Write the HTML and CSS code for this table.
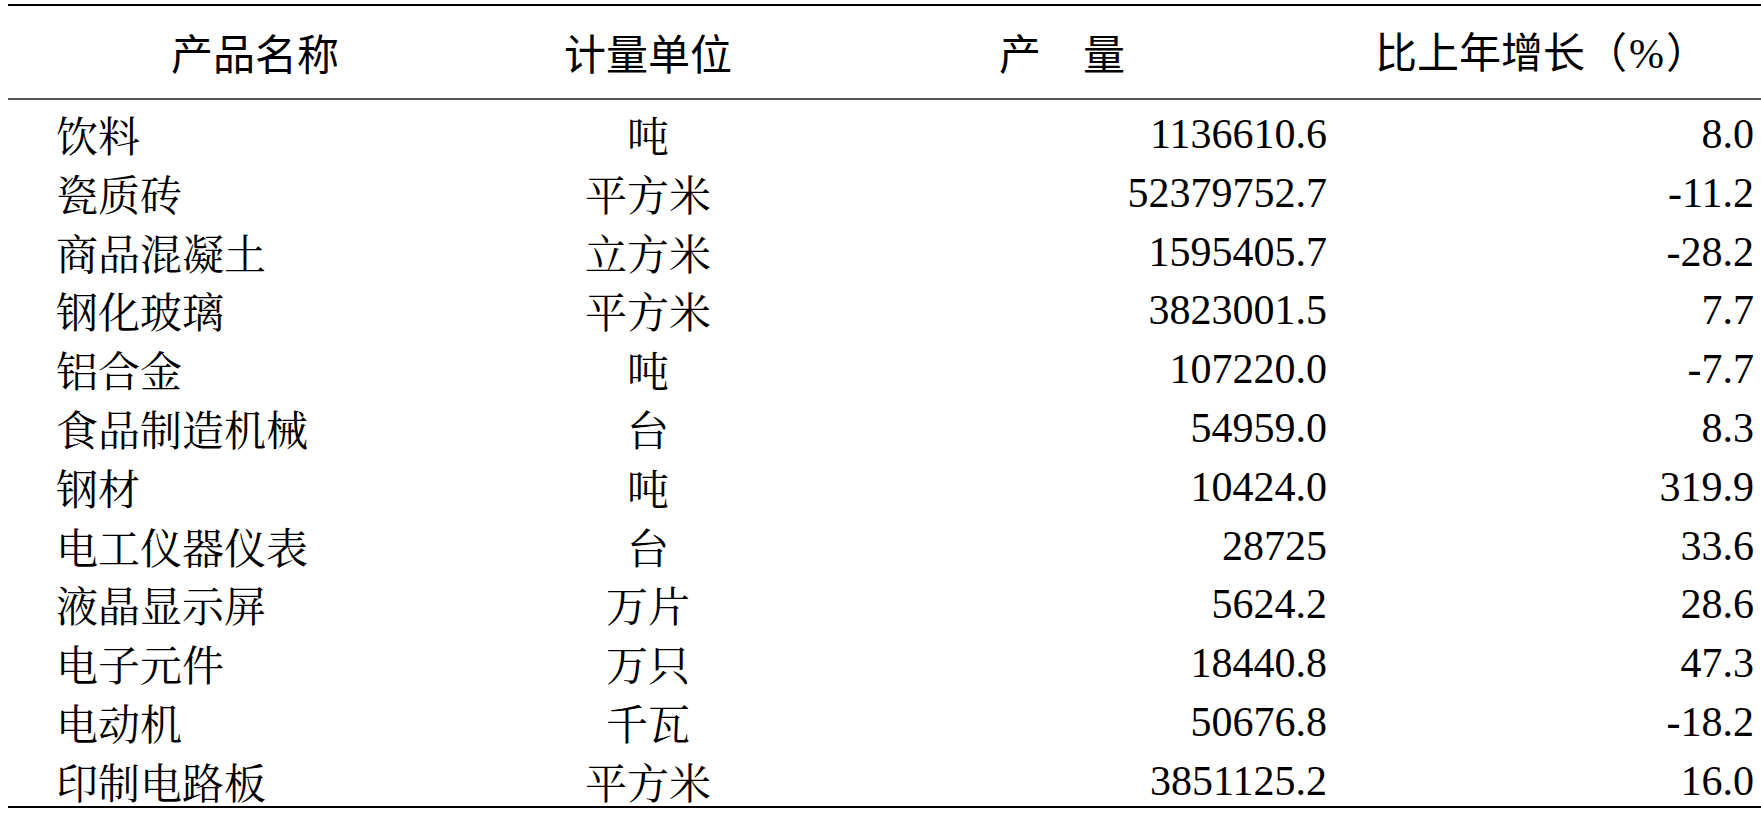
FILE: index.html
```html
<!DOCTYPE html>
<html>
<head>
<meta charset="utf-8">
<title>主要工业产品产量</title>
<link rel="stylesheet" href="styles.css">
</head>
<body>
<div class="sheet">
  <div class="head row-grid">
    <div class="h c1">产品名称</div>
    <div class="h c2">计量单位</div>
    <div class="h c3">产　量</div>
    <div class="h c4">比上年增长（<span class="pc">%</span>）</div>
  </div>
  <div class="body">
    <div class="row row-grid"><div class="name">饮料</div><div class="unit">吨</div><div class="num">1136610.6</div><div class="pct">8.0</div></div>
    <div class="row row-grid"><div class="name">瓷质砖</div><div class="unit">平方米</div><div class="num">52379752.7</div><div class="pct">-11.2</div></div>
    <div class="row row-grid"><div class="name">商品混凝土</div><div class="unit">立方米</div><div class="num">1595405.7</div><div class="pct">-28.2</div></div>
    <div class="row row-grid"><div class="name">钢化玻璃</div><div class="unit">平方米</div><div class="num">3823001.5</div><div class="pct">7.7</div></div>
    <div class="row row-grid"><div class="name">铝合金</div><div class="unit">吨</div><div class="num">107220.0</div><div class="pct">-7.7</div></div>
    <div class="row row-grid"><div class="name">食品制造机械</div><div class="unit">台</div><div class="num">54959.0</div><div class="pct">8.3</div></div>
    <div class="row row-grid"><div class="name">钢材</div><div class="unit">吨</div><div class="num">10424.0</div><div class="pct">319.9</div></div>
    <div class="row row-grid"><div class="name">电工仪器仪表</div><div class="unit">台</div><div class="num">28725</div><div class="pct">33.6</div></div>
    <div class="row row-grid"><div class="name">液晶显示屏</div><div class="unit">万片</div><div class="num">5624.2</div><div class="pct">28.6</div></div>
    <div class="row row-grid"><div class="name">电子元件</div><div class="unit">万只</div><div class="num">18440.8</div><div class="pct">47.3</div></div>
    <div class="row row-grid"><div class="name">电动机</div><div class="unit">千瓦</div><div class="num">50676.8</div><div class="pct">-18.2</div></div>
    <div class="row row-grid"><div class="name">印制电路板</div><div class="unit">平方米</div><div class="num">3851125.2</div><div class="pct">16.0</div></div>
  </div>
</div>
</body>
</html>
```

FILE: styles.css
```css
html, body {
  margin: 0;
  padding: 0;
  background: #ffffff;
}

.sheet {
  margin: 4px 0 0 8px;
  width: 1753px;
  color: #000;
  font-size: 42px;
}

.row-grid {
  display: grid;
  grid-template-columns: 494px 292px 536px 431px;
}

.head {
  border-top: 2px solid #000;
  border-bottom: 2px solid #555;
  height: 92px;
  align-items: center;
}

.h {
  font-family: "Noto Sans CJK SC", sans-serif;
  font-weight: 400;
  text-align: center;
  line-height: 42px;
  white-space: nowrap;
}

.h .pc {
  font-family: "Liberation Serif", serif;
  padding: 0 2px;
}

.h.c4 {
  padding-right: 8px;
}

.body {
  border-bottom: 2px solid #000;
}

.row {
  height: 58.8px;
  box-sizing: border-box;
  padding-top: 13px;
  line-height: 42px;
  white-space: nowrap;
}

.name, .unit {
  font-family: "Noto Serif CJK SC", serif;
  font-weight: 400;
}

.name {
  padding-left: 48px;
}

.unit {
  text-align: center;
}

.num, .pct {
  font-family: "Liberation Serif", serif;
  text-align: right;
}

.num {
  padding-right: 3px;
}

.pct {
  padding-right: 7px;
}
```
